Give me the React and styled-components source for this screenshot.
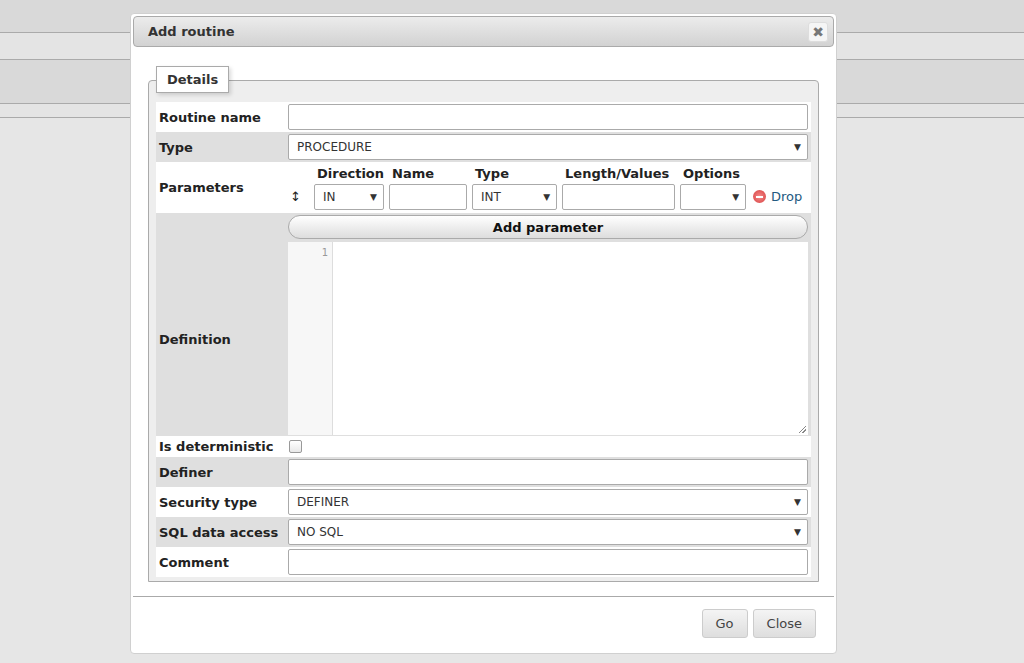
import React from "react";
import styled, { createGlobalStyle } from "styled-components";

const Global = createGlobalStyle`
  html, body { margin: 0; padding: 0; }
  body { background: #e6e6e6; font-family: "DejaVu Sans", Verdana, sans-serif; font-size: 13px; color: #222; }
`;

const Page = styled.div`position: relative; width: 1024px; height: 663px; overflow: hidden;`;
const Band = styled.div`
  height: ${p => p.h}px; background: ${p => p.bg};
  border-bottom: ${p => (p.line ? "1px solid #aaa" : "none")};
`;

const Dialog = styled.div`
  position: absolute; left: 130px; top: 13px; width: 707px; height: 641px;
  background: #fff; border: 1px solid #d0d0d0; border-radius: 4px;
  display: flex; flex-direction: column; padding: 2px; box-sizing: border-box;
`;
const TitleBar = styled.div`
  height: 31px; box-sizing: border-box; border: 1px solid #aaa; border-radius: 4px;
  background: linear-gradient(#ececec, #d2d2d2);
  display: flex; align-items: center; justify-content: space-between; padding: 0 5px 0 14px;
  font-weight: bold; font-size: 13px; color: #333;
`;
const CloseX = styled.div`
  width: 18px; height: 18px; border: 1px solid #ddd; border-radius: 3px; background: #f5f5f5;
  display: flex; align-items: center; justify-content: center; color: #777; font-size: 14px; font-weight: bold;
`;
const Body = styled.div`padding: 19px 15px 0 15px; flex: 0 0 auto;`;
const Fieldset = styled.div`
  position: relative; margin-top: 14px; border: 1px solid #aaa; border-radius: 4px 4px 0 0;
  background: #eee; padding: 21px 7px 4px 7px; height: 502px; box-sizing: border-box;
`;
const Legend = styled.div`
  position: absolute; left: 7px; top: -15px; padding: 5px 10px; background: #fff;
  border: 1px solid #aaa; font-weight: bold; box-shadow: 2px 2px 4px rgba(0,0,0,0.15); color: #333;
`;
const Table = styled.div`display: flex; flex-direction: column;`;
const Row = styled.div`
  display: flex; align-items: center; background: ${p => (p.alt ? "#dfdfdf" : "#fff")};
  height: ${p => p.h || 30}px;
`;
const Label = styled.div`
  width: 132px; padding-left: 3px; padding-top: ${p => p.pt || 0}px; box-sizing: border-box;
  font-weight: bold; color: #222; flex: none;
`;
const Cell = styled.div`flex: 1; padding-right: 3px; display: flex; align-items: center;`;
const Input = styled.div`
  height: ${p => p.h || 26}px; width: ${p => (p.w ? p.w + "px" : "100%")}; box-sizing: border-box;
  border: 1px solid #aaa; border-radius: 2px; background: #fff;
  display: flex; align-items: center; justify-content: space-between; padding: 0 6px 0 8px;
  font-size: 12px; color: #333; flex: none;
`;
const Arrow = styled.span`font-size: 9px; color: #333;`;
const ParamGrid = styled.div`display: flex; align-items: flex-end; gap: 5px;`;
const PCol = styled.div`display: flex; flex-direction: column; gap: 3px;`;
const PHead = styled.div`font-weight: bold; padding-left: 3px; height: 15px;`;
const Drop = styled.div`display: flex; align-items: center; gap: 5px; color: #235a81; height: 26px; font-size: 13px; margin-left: 2px;`;
const DropIcon = styled.span`
  width: 13px; height: 13px; border-radius: 50%; background: radial-gradient(#f58a8a, #d63f3f);
  display: inline-flex; align-items: center; justify-content: center;
  &::after { content: ""; width: 7px; height: 2px; background: #fff; }
`;
const DefCell = styled.div`flex: 1; padding-right: 3px; display: flex; flex-direction: column; gap: 3px; align-self: stretch; padding-top: 2px;`;
const AddBtn = styled.div`
  height: 24px; box-sizing: border-box; border: 1px solid #aaa; border-radius: 12px;
  background: linear-gradient(#fff, #ddd); display: flex; align-items: center; justify-content: center;
  font-weight: bold; color: #111;
`;
const Editor = styled.div`flex: 1; display: flex; background: #fff; margin-bottom: 1px; position: relative;`;
const Gutter = styled.div`width: 45px; background: #f7f7f7; border-right: 1px solid #ddd; text-align: right; padding: 5px 4px 0 0; box-sizing: border-box; font-size: 10px; color: #999;`;
const Grip = styled.div`position: absolute; right: 2px; bottom: 2px; width: 7px; height: 7px;
  background: linear-gradient(135deg, transparent 45%, #888 45%, #888 55%, transparent 55%, transparent 70%, #888 70%, #888 80%, transparent 80%);`;
const Check = styled.div`width: 11px; height: 11px; border: 1px solid #999; border-radius: 2px; background: linear-gradient(#fff,#e8e8e8); margin-left: 1px;`;
const Footer = styled.div`border-top: 1px solid #aaa; margin-top: 14px; display: flex; justify-content: flex-end; gap: 5px; padding: 12px 18px 0 0;`;
const Btn = styled.div`
  height: 29px; box-sizing: border-box; padding: 0 13px; border: 1px solid #ccc; border-radius: 3px;
  background: linear-gradient(#f4f4f4, #dedede); display: flex; align-items: center; color: #444; font-size: 13px;
`;

const Select = ({ children, w, h }) => (
  <Input w={w} h={h}><span>{children}</span><Arrow>▼</Arrow></Input>
);

export default function App() {
  return (
    <Page>
      <Global />
      <Band h={32} bg="#d9d9d9" line />
      <Band h={26} bg="#e4e4e4" line />
      <Band h={43} bg="#d9d9d9" line />
      <Band h={13} bg="#e4e4e4" line />
      <Dialog>
        <TitleBar>Add routine<CloseX>✖</CloseX></TitleBar>
        <Body>
          <Fieldset>
            <Legend>Details</Legend>
            <Table>
              <Row><Label>Routine name</Label><Cell><Input /></Cell></Row>
              <Row alt><Label>Type</Label><Cell><Select>PROCEDURE</Select></Cell></Row>
              <Row h={51}>
                <Label>Parameters</Label>
                <Cell>
                  <ParamGrid>
                    <PCol><PHead /><Drop style={{ width: 19, color: "#222" }}>↕</Drop></PCol>
                    <PCol><PHead>Direction</PHead><Select w={70}>IN</Select></PCol>
                    <PCol><PHead>Name</PHead><Input w={78} /></PCol>
                    <PCol><PHead>Type</PHead><Select w={85}>INT</Select></PCol>
                    <PCol><PHead>Length/Values</PHead><Input w={113} /></PCol>
                    <PCol><PHead>Options</PHead><Select w={66}></Select></PCol>
                    <PCol><PHead /><Drop><DropIcon />Drop</Drop></PCol>
                  </ParamGrid>
                </Cell>
              </Row>
              <Row alt h={223}>
                <Label pt={30}>Definition</Label>
                <DefCell>
                  <AddBtn>Add parameter</AddBtn>
                  <Editor><Gutter>1</Gutter><Grip /></Editor>
                </DefCell>
              </Row>
              <Row h={21}><Label>Is deterministic</Label><Cell><Check /></Cell></Row>
              <Row alt><Label>Definer</Label><Cell><Input /></Cell></Row>
              <Row><Label>Security type</Label><Cell><Select>DEFINER</Select></Cell></Row>
              <Row alt><Label>SQL data access</Label><Cell><Select>NO SQL</Select></Cell></Row>
              <Row><Label>Comment</Label><Cell><Input /></Cell></Row>
            </Table>
          </Fieldset>
        </Body>
        <Footer><Btn>Go</Btn><Btn>Close</Btn></Footer>
      </Dialog>
    </Page>
  );
}
